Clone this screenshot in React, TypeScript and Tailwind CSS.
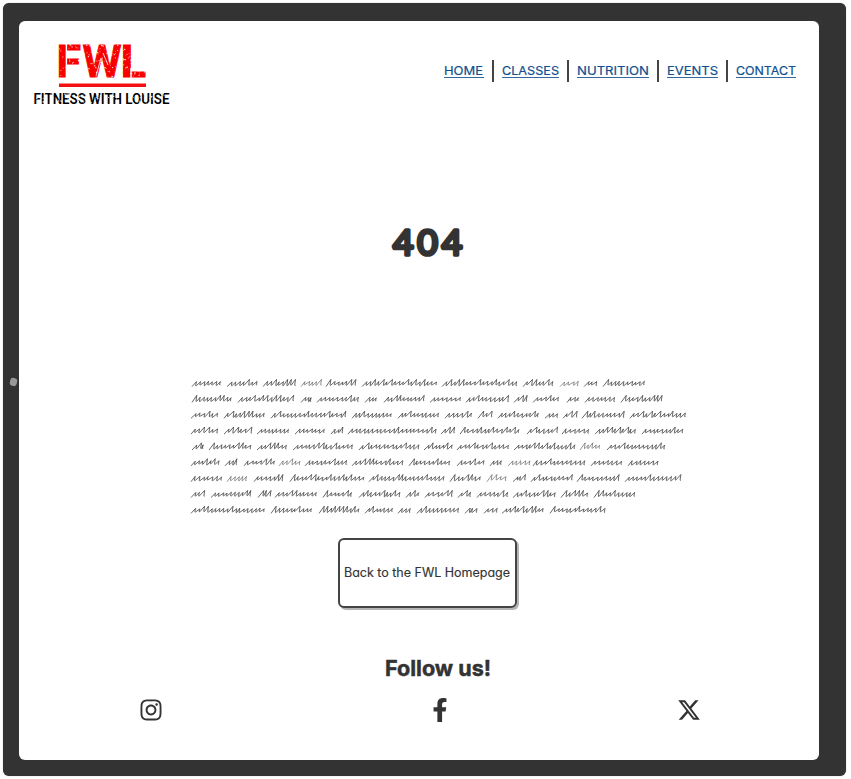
import React from "react";
import { FaFacebookF, FaInstagram } from "react-icons/fa";
import { FaXTwitter } from "react-icons/fa6";

// Horizontal extents of each scribbled word, line by line; a third value marks a faint word.
const scribbles: number[][][] = [
  [[192,221],[227,258],[263,295],[301,321,1],[326,356],[362,437],[442,517],[523,553],[560,579,1],[584,597],[603,645]],
  [[192,232],[238,293],[301,312],[317,359],[365,377],[384,424],[430,461],[466,508],[514,527],[533,559],[567,579],[585,615],[621,662]],
  [[191,218],[224,265],[271,346],[352,392],[398,439],[445,472],[478,492],[498,539],[545,558],[563,577],[582,624],[630,686]],
  [[191,218],[224,251],[257,289],[295,325],[331,343],[348,436],[441,454],[460,519],[527,557],[562,589],[595,636],[642,683]],
  [[192,204],[209,251],[257,287],[293,353],[359,419],[424,452],[457,509],[514,575],[580,600,1],[607,665]],
  [[191,219],[225,237],[244,275],[279,300,1],[305,347],[352,403],[409,450],[457,484],[490,502],[508,530,1],[533,585],[591,622],[628,658]],
  [[191,222],[227,247,1],[254,283],[290,364],[369,444],[450,481],[487,506,1],[513,525],[531,572],[577,619],[625,680]],
  [[191,204],[211,251],[258,270],[275,317],[323,352],[359,400],[406,419],[425,452],[458,471],[477,508],[513,556],[561,588],[594,635]],
  [[191,265],[271,312],[319,359],[365,393],[398,411],[417,459],[465,477],[484,497],[502,544],[550,605]],
];

function random(seed: number) {
  let s = seed;
  return () => {
    s = (s * 16807) % 2147483647;
    return s / 2147483647;
  };
}

function wordPath(x0: number, x1: number, base: number, rnd: () => number) {
  const count = Math.max(2, Math.round((x1 - x0 - 5) / 4.1));
  const pitch = (x1 - x0 - 5) / count;
  let d = `M${x0} ${base + 0.8}`;
  for (let i = 0; i <= count; i++) {
    const h = rnd() > 0.76 ? 6.4 : 3.7 + rnd() * 0.9;
    const px = x0 + 4.6 + i * pitch + (rnd() - 0.5) * 1.2 + (h > 6 ? 0.8 : 0);
    const drop = -rnd() * 1.1;
    d += `L${px.toFixed(1)} ${(base - h).toFixed(1)}l-.8 ${(drop + h - 0.5).toFixed(1)}q-.1 .9 .8 .3`;
  }
  return d;
}

function Scribble() {
  const rnd = random(4049);
  return (
    <svg className="ml-[171px] mt-[116px] block h-[144px] w-[500px]" viewBox="190 374 500 144" fill="none" stroke="#4a4a4a" strokeLinejoin="round" aria-hidden>
      {scribbles.map((line, row) =>
        line.map(([a, b, faint], i) => (
          <path key={`${row}-${i}`} d={wordPath(a, b, 384.8 + row * 15.85, rnd)} strokeWidth={faint ? 0.6 : 0.85} />
        ))
      )}
    </svg>
  );
}

function Logo() {
  const rnd = random(77);
  const specks = Array.from({ length: 170 }, () => [59 + rnd() * 86, 44 + rnd() * 33, 0.5 + rnd() * 0.8]);
  const nicks = Array.from({ length: 90 }, () => [34 + rnd() * 134, 93 + rnd() * 11, 0.6 + rnd() * 0.8]);
  return (
    <svg className="h-[72px] w-[140px] overflow-visible" viewBox="32 38 140 72" role="img" aria-label="Fitness with Louise">
      <g fill="#f90000" stroke="#f90000" strokeWidth=".9" fontFamily="Roboto, sans-serif" fontWeight="700" fontSize="44.6">
        <text x="56.6" y="76.6" textLength="24.5" lengthAdjust="spacingAndGlyphs">F</text>
        <text x="82.5" y="76.6" textLength="39" lengthAdjust="spacingAndGlyphs">W</text>
        <text x="120.6" y="76.6" textLength="25.5" lengthAdjust="spacingAndGlyphs">L</text>
      </g>
      <path d="M66.4 43v35M131 68v10" stroke="#fff" strokeWidth="1.4" />
      <path d="M96 76l5-18M108 65l-5-12" stroke="#fff" strokeWidth=".8" />
      {specks.map(([x, y, s], i) => (
        <rect key={i} x={x} y={y} width={s} height={s} fill="#fff" opacity=".85" />
      ))}
      <rect x="59" y="83.5" width="87" height="3.5" fill="#f31010" />
      <text x="33.5" y="104.4" textLength="136" lengthAdjust="spacingAndGlyphs" fill="#000" fontFamily="Roboto, sans-serif" fontWeight="600" fontSize="15">FITNESS WITH LOUISE</text>
      {nicks.map(([x, y, s], i) => (
        <rect key={i} x={x} y={y} width={s} height={s} fill="#fff" opacity=".9" />
      ))}
    </svg>
  );
}

const links = [
  { label: "HOME", size: "w-[40px]", fit: 39 },
  { label: "CLASSES", size: "w-[57px]", fit: 57 },
  { label: "NUTRITION", size: "w-[72px]", fit: 72 },
  { label: "EVENTS", size: "w-[51px]", fit: 51 },
  { label: "CONTACT", size: "w-[60px]", fit: 60 },
];

function Nav() {
  return (
    <nav className="mt-[-1px] flex h-[22px] items-center">
      {links.map(({ label, size, fit }, i) => (
        <React.Fragment key={label}>
          {i > 0 && <span className="ml-[8.5px] mr-[8px] h-[22px] w-[1.6px] bg-[#444]" />}
          <a href="#" className={`${size} mt-[-1px] block h-[14px] border-b border-[#33699f]`}>
            <svg className="block h-[13px] w-full overflow-visible">
              <text x="0" y="11.3" textLength={fit} lengthAdjust="spacingAndGlyphs" fill="#105090" stroke="#105090" strokeWidth=".2" fontFamily="Inter, sans-serif" fontSize="12">{label}</text>
            </svg>
          </a>
        </React.Fragment>
      ))}
    </nav>
  );
}

export default function App() {
  return (
    <div className="h-[779px] w-[851px] overflow-hidden bg-white pl-[3px] pt-[3px] font-['Inter',sans-serif] text-[#333] [font-feature-settings:'cv11']">
      <div className="relative h-[773px] w-[843px] rounded-[6px] bg-[#333] pl-4 pt-[18px] shadow-[0_0_1px_#777]">
        <span className="absolute left-[7px] top-[375px] h-[8px] w-[7px] rotate-12 rounded-[3px] bg-[#999]" />
        <main className="h-[739px] w-[800px] rounded-[6px] bg-white">
          <header className="flex items-start justify-between pl-[13px] pr-[23px] pt-[17px]">
            <Logo />
            <div className="pt-[23px]"><Nav /></div>
          </header>
          <h1 className="ml-[370px] mt-[113px] h-[36px] w-[76px]">
            <svg className="block h-[36px] w-[76px] overflow-visible">
              <text x="4 28.2 52.8" y="32" fontFamily="Lato, sans-serif" fontWeight="400" fontSize="35.5" fill="#333" stroke="#333" strokeWidth="3.6" strokeLinejoin="round">404</text>
            </svg>
          </h1>
          <Scribble />
          <button className="ml-[319px] mt-[19px] flex h-[70px] w-[179px] items-center justify-center rounded-[6px] border-2 border-[#444] bg-white shadow-[2px_2px_0_#b4b4b4]">
            <svg className="ml-[-2px] h-[20px] w-[166px] overflow-visible">
              <text x="0" y="14" textLength="166" lengthAdjust="spacingAndGlyphs" fontFamily="Inter, sans-serif" fontSize="12.4" fill="#333" stroke="#333" strokeWidth=".15">Back to the FWL Homepage</text>
            </svg>
          </button>
          <h2 className="ml-[365px] mt-[45px] h-[30px] w-[112px]">
            <svg className="block h-[30px] w-[112px] overflow-visible">
              <text x="1" y="22.5" textLength="106" lengthAdjust="spacingAndGlyphs" fontFamily="Inter, sans-serif" fontWeight="700" fontSize="22" fill="#333" stroke="#333" strokeWidth=".5" strokeLinejoin="round">Follow us!</text>
            </svg>
          </h2>
          <footer className="mt-[14px] flex h-[26px] items-center justify-between pl-[120px] pr-[118px]">
            <FaInstagram className="size-[24px]" />
            <FaFacebookF className="ml-[39px] size-[24px]" />
            <FaXTwitter className="size-[24px]" />
          </footer>
        </main>
      </div>
    </div>
  );
}
